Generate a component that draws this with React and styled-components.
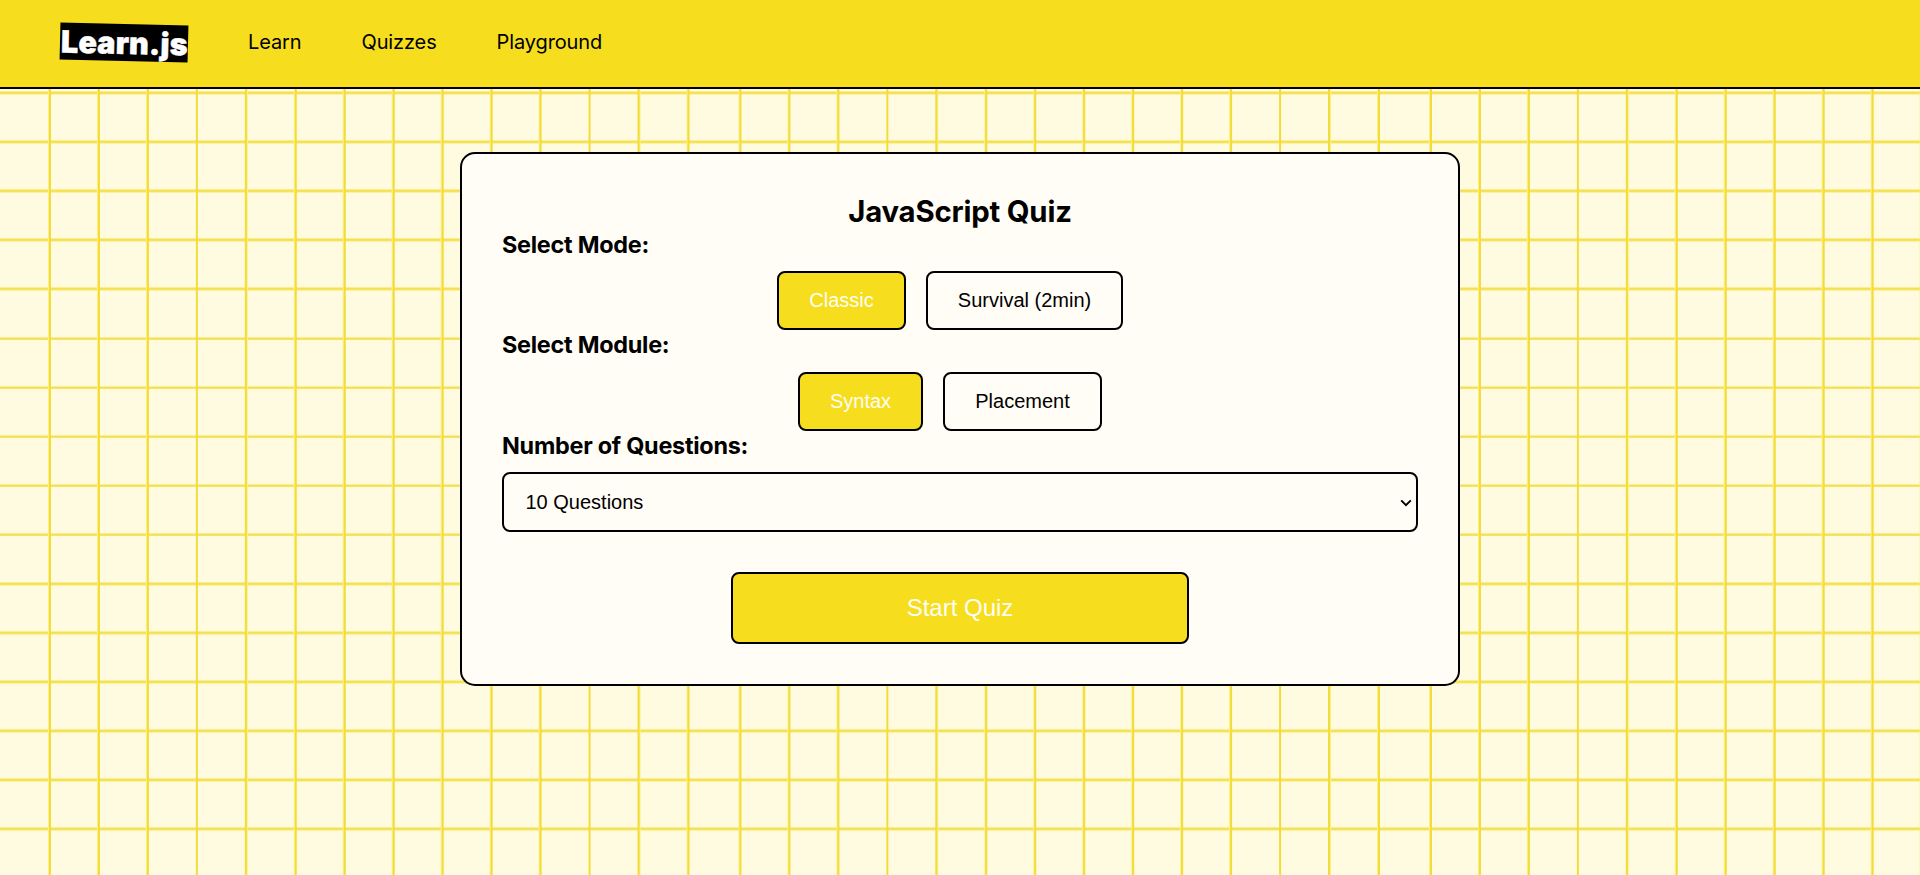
import React from "react";
import styled, { createGlobalStyle } from "styled-components";

const GlobalStyle = createGlobalStyle`
  *, *::before, *::after { box-sizing: border-box; }
  body {
    margin: 0;
    font-family: Inter, "Liberation Sans", sans-serif;
    color: #000;
  }
`;

const Page = styled.div`
  min-height: 100vh;
  background-color: #fffbe1;
  background-image:
    repeating-linear-gradient(
      to right,
      transparent 0 46.2px,
      #fbf08a 46.2px 47px,
      #f3db38 47px 49px,
      #fbf08a 49px 49.08px
    ),
    repeating-linear-gradient(
      to bottom,
      #fbf19a 0 1px,
      #f4e056 1px 3px,
      #fbf19a 3px 3.6px,
      transparent 3.6px 49.09px
    );
  background-size: 690.5px 100%, 100% 100%;
  background-position: 2px 0, 1px 41.9px;
`;

const Header = styled.header`
  display: flex;
  align-items: center;
  height: 89px;
  padding: 0 60px 4px;
  background: #f6de1f;
  border-bottom: 2px solid #000;
`;

const Logo = styled.a`
  width: 128px;
  height: 37px;
  margin-top: 2px;
  padding-left: 1px;
  line-height: 37px;
  background: #000;
  color: #fff;
  font-weight: 900;
  font-size: 30.5px;
  letter-spacing: 0.15px;
  -webkit-text-stroke: 0.5px #fff;
  white-space: nowrap;
  transform: rotate(1.4deg);
`;

const Nav = styled.nav`
  display: flex;
  gap: 60px;
  margin-left: 60px;
`;

const NavLink = styled.a`
  font-size: 20px;
  line-height: 24px;
  letter-spacing: -0.12px;
  color: #000;
`;

const Main = styled.main`
  display: flex;
  justify-content: center;
  padding-top: 63px;
`;

const Card = styled.section`
  width: 1000px;
  height: 534px;
  padding: 40px;
  background: #fffdf5;
  border: 2px solid #000;
  border-radius: 15px;
`;

const Title = styled.h1`
  margin: 0;
  font-size: 29.3px;
  line-height: 36px;
  font-weight: 700;
  letter-spacing: -0.18px;
  text-align: center;
`;

const Label = styled.h2`
  margin: 0 0 12.4px;
  font-size: 23.4px;
  line-height: 29px;
  font-weight: 700;
  letter-spacing: -0.25px;
`;

const Options = styled.div`
  display: flex;
  justify-content: center;
  gap: 20px;
  padding-right: 20px;
`;

const Button = styled.button`
  width: ${(p) => p.$width}px;
  height: ${(p) => p.$height || 59}px;
  padding: 0;
  border: 2px solid #000;
  border-radius: 8px;
  background: ${(p) => (p.$filled ? "#f6de1f" : "#fffdf5")};
  color: ${(p) => (p.$filled ? "#fffdf5" : "#000")};
  font-family: "Liberation Sans", Arial, sans-serif;
  font-size: ${(p) => p.$size || 20}px;
`;

const SelectBox = styled.div`
  position: relative;
`;

const Select = styled.select`
  appearance: none;
  display: block;
  width: 100%;
  height: 60px;
  padding: 0 0 0 21.5px;
  border: 2px solid #000;
  border-radius: 8px;
  background: #fffdf5;
  color: #000;
  font-family: "Liberation Sans", Arial, sans-serif;
  font-size: 20px;
`;

const Chevron = styled.svg`
  position: absolute;
  right: 6px;
  top: 27px;
  width: 12px;
  height: 8px;
  pointer-events: none;
`;

const Actions = styled.div`
  display: flex;
  justify-content: center;
  margin-top: 40px;
`;

export default function App() {
  return (
    <Page>
      <GlobalStyle />
      <Header>
        <Logo>Learn.js</Logo>
        <Nav>
          <NavLink>Learn</NavLink>
          <NavLink>Quizzes</NavLink>
          <NavLink>Playground</NavLink>
        </Nav>
      </Header>
      <Main>
        <Card>
          <Title>JavaScript Quiz</Title>
          <Label>Select Mode:</Label>
          <Options>
            <Button $filled $width={129}>Classic</Button>
            <Button $width={197}>Survival (2min)</Button>
          </Options>
          <Label>Select Module:</Label>
          <Options>
            <Button $filled $width={125}>Syntax</Button>
            <Button $width={159}>Placement</Button>
          </Options>
          <Label>Number of Questions:</Label>
          <SelectBox>
            <Select defaultValue="10">
              <option value="10">10 Questions</option>
            </Select>
            <Chevron viewBox="0 0 12 8">
              <path d="M1.2 1.4L6 6.2L10.8 1.4" fill="none" stroke="#000" strokeWidth="2" />
            </Chevron>
          </SelectBox>
          <Actions>
            <Button $filled $width={458} $height={72} $size={24}>Start Quiz</Button>
          </Actions>
        </Card>
      </Main>
    </Page>
  );
}
